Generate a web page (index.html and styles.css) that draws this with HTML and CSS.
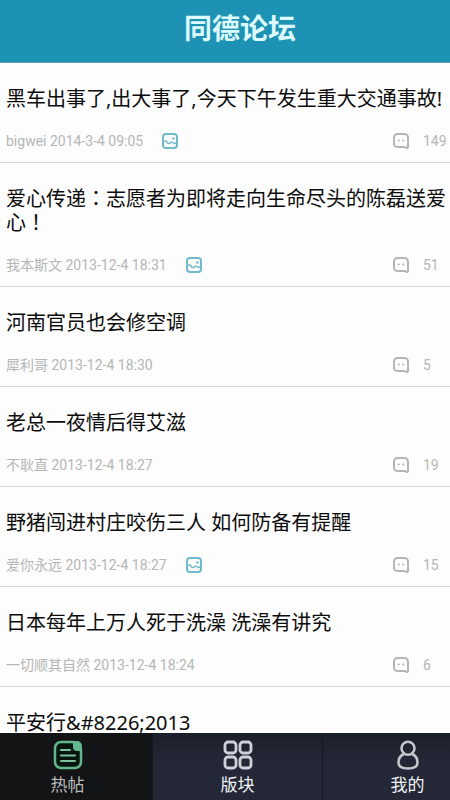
FILE: index.html
```html
<!DOCTYPE html>
<html lang="zh-CN">
<head>
<meta charset="utf-8">
<meta name="viewport" content="width=device-width, initial-scale=1">
<title>同德论坛</title>
<link rel="stylesheet" href="styles.css">
</head>
<body>
<svg class="defs" width="0" height="0" aria-hidden="true">
  <symbol id="photo" viewBox="0 0 16 16">
    <rect x="1" y="1" width="14" height="14" rx="3" fill="none" stroke="currentColor" stroke-width="2"/>
    <path d="M2 8.500c1.500-1 2.400-.5 3.200.8 1 1.600 2.400 1.600 3.400.5.900-1 1.900-.7 2.600 0 .8.700 1.800.7 2.800.2" fill="none" stroke="currentColor" stroke-width="1.500"/>
    <circle cx="11.300" cy="5.500" r="1.200" fill="currentColor"/>
  </symbol>
  <symbol id="comment" viewBox="0 0 16 16">
    <path d="M4.500 1h7A3.500 3.500 0 0 1 15 4.500V14c0 .9-.8 1.300-1.600.8L12 14H4.500A3.500 3.500 0 0 1 1 10.500v-6A3.500 3.500 0 0 1 4.500 1z" fill="none" stroke="currentColor" stroke-width="2" stroke-linejoin="round"/>
    <circle cx="5.700" cy="7.500" r="1.100" fill="currentColor"/>
    <circle cx="10.300" cy="7.500" r="1.100" fill="currentColor"/>
  </symbol>
</svg>
<div class="app">
  <header class="header"><h1>同德论坛</h1></header>
  <main class="posts">
    <article class="post">
      <h2>黑车出事了,出大事了,今天下午发生重大交通事故!</h2>
      <div class="meta"><span>bigwei 2014-3-4 09:05</span><svg class="icon photo"><use href="#photo"/></svg><svg class="icon comment"><use href="#comment"/></svg><span class="count">149</span></div>
    </article>
    <article class="post">
      <h2>爱心传递<span class="mark" lang="zh-TW">：</span>志愿者为即将走向生命尽头的陈磊送爱心<span class="mark" lang="zh-TW">！</span></h2>
      <div class="meta"><span>我本斯文 2013-12-4 18:31</span><svg class="icon photo"><use href="#photo"/></svg><svg class="icon comment"><use href="#comment"/></svg><span class="count">51</span></div>
    </article>
    <article class="post">
      <h2>河南官员也会修空调</h2>
      <div class="meta"><span>犀利哥 2013-12-4 18:30</span><svg class="icon comment"><use href="#comment"/></svg><span class="count">5</span></div>
    </article>
    <article class="post">
      <h2>老总一夜情后得艾滋</h2>
      <div class="meta"><span>不耿直 2013-12-4 18:27</span><svg class="icon comment"><use href="#comment"/></svg><span class="count">19</span></div>
    </article>
    <article class="post">
      <h2>野猪闯进村庄咬伤三人 如何防备有提醒</h2>
      <div class="meta"><span>爱你永远 2013-12-4 18:27</span><svg class="icon photo"><use href="#photo"/></svg><svg class="icon comment"><use href="#comment"/></svg><span class="count">15</span></div>
    </article>
    <article class="post">
      <h2>日本每年上万人死于洗澡 洗澡有讲究</h2>
      <div class="meta"><span>一切顺其自然 2013-12-4 18:24</span><svg class="icon comment"><use href="#comment"/></svg><span class="count">6</span></div>
    </article>
    <article class="post">
      <h2>平安行&amp;#8226;2013</h2>
    </article>
  </main>
  <nav class="nav">
    <div class="tabs">
      <button class="tab active" type="button">
        <svg class="tab-icon" viewBox="0 0 30 30">
          <path d="M8 2h12l8 8v12a6 6 0 0 1-6 6H8a6 6 0 0 1-6-6V8a6 6 0 0 1 6-6z" fill="#07150f" stroke="#62b78d" stroke-width="2.500"/>
          <path d="M20 1h4a5 5 0 0 1 5 5v5h-5a4 4 0 0 1-4-4z" fill="#62b78d"/>
          <path d="M8 10h9M8 15.500h14M8 21h14" fill="none" stroke="#7cc29e" stroke-width="2.200" stroke-linecap="round"/>
        </svg>
        <span>热帖</span>
      </button>
      <button class="tab" type="button">
        <svg class="tab-icon" viewBox="0 0 30 30" fill="none" stroke="#cfd1d8" stroke-width="2.800">
          <rect x="2" y="2" width="11" height="11" rx="3"/>
          <rect x="17" y="2" width="11" height="11" rx="3"/>
          <rect x="2" y="17" width="11" height="11" rx="3"/>
          <rect x="17" y="17" width="11" height="11" rx="3"/>
        </svg>
        <span>版块</span>
      </button>
      <button class="tab" type="button">
        <svg class="tab-icon" viewBox="0 0 30 30" fill="none" stroke="#c4c6cb" stroke-width="2.600">
          <circle cx="15" cy="8.300" r="6.500"/>
          <path d="M11 14c-3.500 1.500-5.500 4.500-5.500 8.500 0 3.800 3.500 6 9.500 6s9.500-2.200 9.500-6c0-4-2-7-5.500-8.500"/>
        </svg>
        <span>我的</span>
      </button>
    </div>
  </nav>
</div>
</body>
</html>
```
FILE: styles.css
```css
* {
  box-sizing: border-box;
}

body {
  margin: 0;
  background: #fdfdfd;
  color: #0c0c0c;
  font-family: Roboto, "Noto Sans CJK SC", sans-serif;
}

.defs {
  position: absolute;
}

.app {
  display: flex;
  flex-direction: column;
  height: 100vh;
}

.header {
  flex: none;
  padding: 10px 0 12px 30px;
  border-bottom: 1px solid #5c9bae;
  background: #1e92b4;
  text-align: center;
}

.header h1 {
  margin: 0;
  color: #dcfbff;
  font-size: 28px;
  font-weight: 700;
  line-height: 40px;
}

.posts {
  flex: 1;
  min-height: 0;
  overflow: hidden;
}

.post {
  padding: 24px 0 11px 6px;
  border-bottom: 1px solid #d4d4d4;
}

.post h2 {
  margin: 0;
  font-family: "Noto Sans", "Noto Sans CJK SC", sans-serif;
  font-size: 20px;
  font-weight: 400;
  line-height: 24px;
}

.mark {
  font-family: "Noto Sans CJK TC", sans-serif;
  line-height: 1;
}

.meta {
  display: flex;
  align-items: center;
  margin-top: 20px;
  color: #b6b6b6;
  font-size: 14px;
  line-height: 20px;
}

.icon {
  flex: none;
  width: 16px;
  height: 16px;
}

.photo {
  margin-left: 19px;
  color: #70bbcb;
}

.comment {
  margin-left: auto;
}

.count {
  width: 41px;
  padding-left: 14px;
}

.nav {
  flex: none;
  overflow: hidden;
  background: #232734;
}

.tabs {
  display: grid;
  grid-template-columns: repeat(3, 1fr);
  margin: 0 -43px 0 -17px;
}

.tab {
  display: flex;
  flex-direction: column;
  align-items: center;
  gap: 4px;
  padding: 7px 0 4px;
  border: 0;
  border-right: 1px solid #151822;
  background: linear-gradient(#1b1f2a, #242836 40%);
  color: #f1f3f7;
  font-family: inherit;
  font-size: 17px;
  line-height: 22px;
}

.tab.active {
  background: #131415;
  color: #b9bbbb;
}

.tab-icon {
  width: 30px;
  height: 30px;
}
```
